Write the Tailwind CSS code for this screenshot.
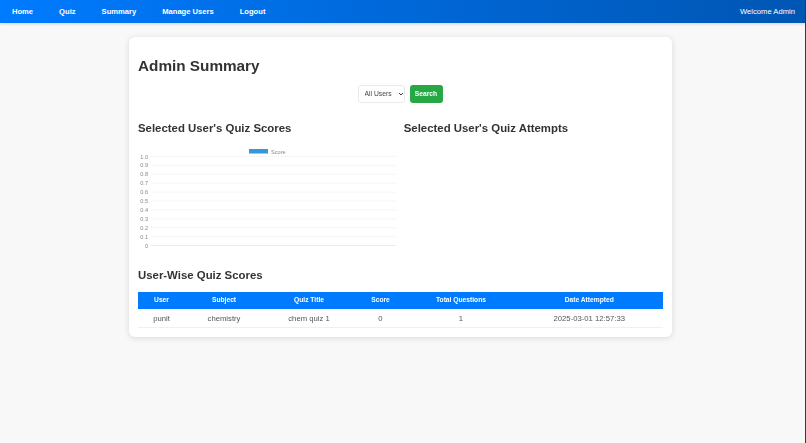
<!DOCTYPE html>
<html lang="en">
<head>
  <meta charset="UTF-8">
  <title>Admin Summary</title>
  <script src="https://cdn.jsdelivr.net/npm/@tailwindcss/browser@4"></script>
</head>
<body class="flex h-[443px] overflow-hidden bg-[#3a3a3a] font-['Liberation_Sans',Arial,sans-serif] text-[#333]">
  <div class="min-w-0 flex-1 bg-[#f8f8f8] mr-[1.5px]">
    <nav class="flex h-[23px] items-center justify-between bg-gradient-to-r from-[#007bff] to-[#0056b3] pl-3 pr-[9.5px] text-white shadow-[0_1px_3px_rgba(0,0,0,0.15)]">
      <ul class="flex gap-[26px] text-[7.6px] font-bold">
        <li>Home</li>
        <li>Quiz</li>
        <li>Summary</li>
        <li>Manage Users</li>
        <li>Logout</li>
      </ul>
      <span class="text-[7.65px]">Welcome Admin</span>
    </nav>

    <main class="mt-[14px] ml-[129px] h-[300px] w-[543px] rounded-[6px] bg-white pr-[9.5px] pl-[9px] pt-[19px] shadow-[0_1px_6px_rgba(0,0,0,0.13)] will-change-transform">
      <h1 class="text-[15.3px] leading-[20px] font-bold">Admin Summary</h1>
      <form class="mt-[9px] flex justify-center gap-[4.5px]">
        <div class="relative h-[18px] w-[47px]">
          <select class="block h-full w-full appearance-none rounded-[3px] border border-[#eaeaea] bg-white pl-[5.5px] text-[6.75px] text-[#444]">
            <option>All Users</option>
          </select>
          <svg class="absolute top-[7px] right-[1.5px]" width="6" height="4" viewBox="0 0 6 4" fill="none" stroke="#444" stroke-width="1">
            <path d="M1 1l2 2 2-2"/>
          </svg>
        </div>
        <button type="button" class="h-[18px] w-[33px] rounded-[3px] bg-[#28a745] text-[6.7px] font-bold text-white">Search</button>
      </form>

      <div class="mt-[18px] grid grid-cols-2 gap-[7px]">
        <section>
          <h2 class="text-[11.4px] leading-[14px] font-bold">Selected User's Quiz Scores</h2>
          <svg class="mt-[14px] block" width="258" height="100" viewBox="0 0 258 100" font-family="Liberation Sans, Arial, sans-serif" font-size="5.6" fill="#888">
            <rect x="111" y="0" width="19" height="4.5" fill="#3498db"/>
            <text x="133" y="4.5">Score</text>
            <g stroke="#f0f0f0" stroke-width="0.7">
              <line x1="13" x2="258" y1="7.5" y2="7.5"/>
              <line x1="13" x2="258" y1="16.4" y2="16.4"/>
              <line x1="13" x2="258" y1="25.3" y2="25.3"/>
              <line x1="13" x2="258" y1="34.2" y2="34.2"/>
              <line x1="13" x2="258" y1="43.1" y2="43.1"/>
              <line x1="13" x2="258" y1="52" y2="52"/>
              <line x1="13" x2="258" y1="60.9" y2="60.9"/>
              <line x1="13" x2="258" y1="69.8" y2="69.8"/>
              <line x1="13" x2="258" y1="78.7" y2="78.7"/>
              <line x1="13" x2="258" y1="87.6" y2="87.6"/>
              <line x1="13" x2="258" y1="96.5" y2="96.5" stroke="#e2e2e2"/>
            </g>
            <g text-anchor="end">
              <text x="10" y="9.5">1.0</text>
              <text x="10" y="18.4">0.9</text>
              <text x="10" y="27.3">0.8</text>
              <text x="10" y="36.2">0.7</text>
              <text x="10" y="45.1">0.6</text>
              <text x="10" y="54">0.5</text>
              <text x="10" y="62.9">0.4</text>
              <text x="10" y="71.8">0.3</text>
              <text x="10" y="80.7">0.2</text>
              <text x="10" y="89.6">0.1</text>
              <text x="10" y="98.5">0</text>
            </g>
          </svg>
        </section>
        <section>
          <h2 class="text-[11.4px] leading-[14px] font-bold">Selected User's Quiz Attempts</h2>
        </section>
      </div>

      <h2 class="mt-[19px] text-[11.4px] leading-[14px] font-bold">User-Wise Quiz Scores</h2>
      <table class="mt-[10px] w-full table-fixed text-center text-[7.7px] text-[#555]">
        <thead class="bg-[#007bff] text-[6.7px] font-bold text-white">
          <tr class="h-[17px]">
            <th class="w-[47px] font-bold">User</th>
            <th class="w-[78px] font-bold">Subject</th>
            <th class="w-[92px] font-bold">Quiz Title</th>
            <th class="w-[51px] font-bold">Score</th>
            <th class="w-[110px] font-bold">Total Questions</th>
            <th class="font-bold">Date Attempted</th>
          </tr>
        </thead>
        <tbody>
          <tr class="h-[18.5px] border-b border-[#f0f0f0]">
            <td class="pt-[1px]">punit</td>
            <td class="pt-[1px]">chemistry</td>
            <td class="pt-[1px]">chem quiz 1</td>
            <td class="pt-[1px]">0</td>
            <td class="pt-[1px]">1</td>
            <td class="pt-[1px]">2025-03-01 12:57:33</td>
          </tr>
        </tbody>
      </table>
    </main>
  </div>
</body>
</html>
